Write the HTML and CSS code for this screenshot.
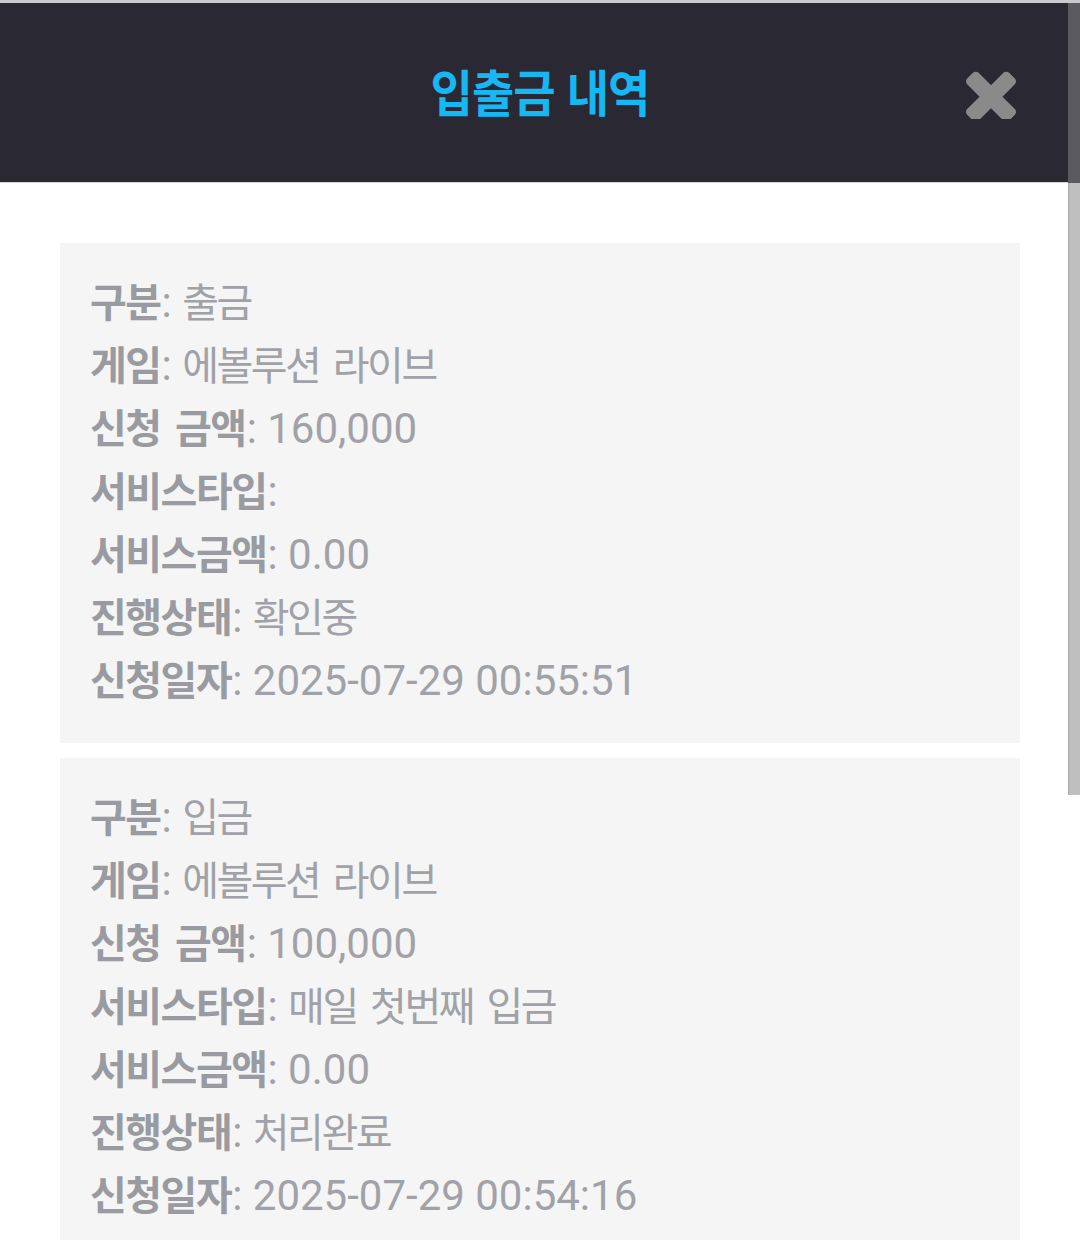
FILE: index.html
```html
<!DOCTYPE html>
<html lang="ko">
<head>
<meta charset="utf-8">
<title>입출금 내역</title>
<link rel="stylesheet" href="styles.css">
</head>
<body>
<div class="topline"></div>
<header class="header">
  <h1 class="title"><span class="title-text">입출금 내역</span></h1>
  <button class="close" aria-label="닫기">
    <svg viewBox="110 302 1188 1188" width="50" height="50"><path fill="#8a8a8a" d="M1298 1322q0 40-28 68l-136 136q-28 28-68 28t-68-28l-294-294-294 294q-28 28-68 28t-68-28l-136-136q-28-28-28-68t28-68l294-294-294-294q-28-28-28-68t28-68l136-136q28-28 68-28t68 28l294 294 294-294q28-28 68-28t68 28l136 136q28 28 28 68t-28 68l-294 294 294 294q28 28 28 68z"/></svg>
  </button>
</header>
<main class="list">
  <section class="card">
    <div class="row"><b class="label">구분</b><span class="colon">: </span>출금</div>
    <div class="row"><b class="label">게임</b><span class="colon">: </span>에볼루션 라이브</div>
    <div class="row"><b class="label">신청 금액</b><span class="colon">: </span><span class="num">160,000</span></div>
    <div class="row"><b class="label">서비스타입</b><span class="colon">:</span></div>
    <div class="row"><b class="label">서비스금액</b><span class="colon">: </span><span class="num">0.00</span></div>
    <div class="row"><b class="label">진행상태</b><span class="colon">: </span>확인중</div>
    <div class="row"><b class="label">신청일자</b><span class="colon">: </span><span class="num">2025-07-29 00:55:51</span></div>
  </section>
  <section class="card">
    <div class="row"><b class="label">구분</b><span class="colon">: </span>입금</div>
    <div class="row"><b class="label">게임</b><span class="colon">: </span>에볼루션 라이브</div>
    <div class="row"><b class="label">신청 금액</b><span class="colon">: </span><span class="num">100,000</span></div>
    <div class="row"><b class="label">서비스타입</b><span class="colon">: </span>매일 첫번째 입금</div>
    <div class="row"><b class="label">서비스금액</b><span class="colon">: </span><span class="num">0.00</span></div>
    <div class="row"><b class="label">진행상태</b><span class="colon">: </span>처리완료</div>
    <div class="row"><b class="label">신청일자</b><span class="colon">: </span><span class="num">2025-07-29 00:54:16</span></div>
  </section>
</main>
<div class="scrollbar"><div class="scroll-top"></div><div class="scroll-thumb"></div></div>
</body>
</html>
```
FILE: styles.css
```css
html, body {
  margin: 0;
  padding: 0;
  background: #ffffff;
}
body {
  position: relative;
  width: 1080px;
  min-height: 1240px;
  overflow: hidden;
  font-family: Roboto, "Noto Sans CJK KR", sans-serif;
}
.topline {
  height: 3px;
  background: #c9c9d0;
}
.header {
  height: 180px;
  background: #2a2933;
  display: flex;
  align-items: center;
  justify-content: center;
  position: relative;
  border-bottom: 1px solid #d6d6da;
  box-sizing: border-box;
}
.title {
  margin: 0 0 6px 0;
  font-family: "Noto Sans CJK KR", sans-serif;
  font-weight: 700;
  font-size: 50px;
  line-height: 1;
  color: #16b7f2;
}
.title-text {
  display: inline-block;
  transform: scaleX(0.92);
  letter-spacing: -1px;
}
.close {
  position: absolute;
  right: 64px;
  top: 66px;
  background: none;
  border: 0;
  padding: 0;
  width: 50px;
  height: 50px;
  display: block;
}
.close svg {
  display: block;
}
.list {
  padding: 60px 60px 0 60px;
  display: flex;
  flex-direction: column;
  gap: 15px;
}
.card {
  background: #f5f5f5;
  padding: 28px 30px 31px 30px;
}
.row {
  font-family: Roboto, "Noto Sans CJK KR", sans-serif;
  font-size: 40px;
  letter-spacing: -2.5px;
  word-spacing: 6px;
  line-height: 63px;
  height: 63px;
  color: #a0a2a7;
  white-space: pre;
}
.label {
  font-weight: 700;
  color: #999ba0;
  letter-spacing: -1.5px;
}
.colon, .num {
  font-size: 42px;
  letter-spacing: 0;
  word-spacing: 0;
}
.colon {
  margin-left: 1px;
}
.scrollbar {
  position: absolute;
  top: 3px;
  right: 0;
  width: 12px;
  display: flex;
  flex-direction: column;
}
.scroll-top {
  height: 180px;
  background: #5a5a60;
}
.scroll-thumb {
  height: 612px;
  background: #bfbfbf;
  border-left: 1px solid #a8a8a8;
  box-sizing: border-box;
}
```
